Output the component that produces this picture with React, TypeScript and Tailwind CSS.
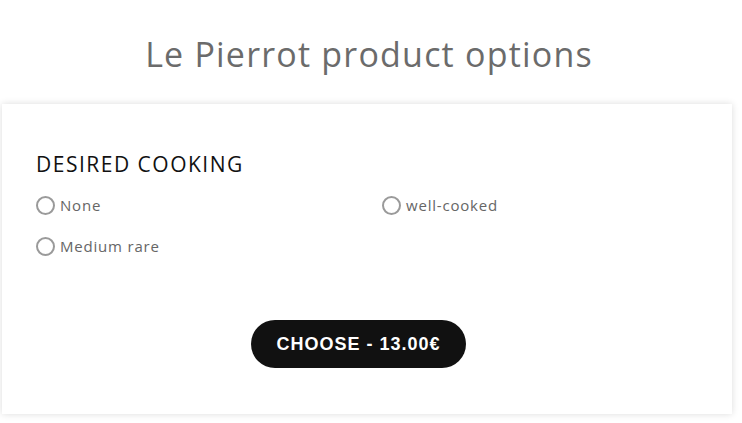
import React from "react";

function Radio({ label }: { label: string }) {
  return (
    <label className="flex items-center h-[20px]">
      <span className="w-[19px] h-[19px] rounded-full border-2 border-[#9a9a9a] bg-white shrink-0" />
      <span className="ml-[5px] text-[15px] text-[#666] tracking-[0.8px]" style={{ fontFamily: '"Open Sans", sans-serif' }}>
        {label}
      </span>
    </label>
  );
}

export default function App() {
  return (
    <div className="w-[742px] h-[423px] bg-white overflow-hidden">
      <h1
        className="text-center text-[34px] leading-[40px] text-[#6b6b6b] pt-[34px] h-[104px] tracking-[1.2px] pr-[4px]"
        style={{ fontFamily: '"Open Sans", sans-serif' }}
      >
        Le Pierrot product options
      </h1>
      <div className="ml-[2px] w-[730px] h-[310px] bg-white shadow-[0_0_7px_rgba(0,0,0,0.14)] pl-[34px] pt-[48px]">
        <h2
          className="text-[21px] leading-[24px] text-[#111] tracking-[1.5px]"
          style={{ fontFamily: '"Open Sans", sans-serif' }}
        >
          DESIRED COOKING
        </h2>
        <div className="grid grid-cols-[346px_1fr] gap-y-[21px] mt-[19px]">
          <Radio label="None" />
          <Radio label="well-cooked" />
          <Radio label="Medium rare" />
        </div>
        <div className="flex mt-[64px]">
          <button
            className="h-[48px] w-[215px] ml-[215px] rounded-full bg-[#111] text-white text-[18px] font-bold tracking-[1px]"
            style={{ fontFamily: '"Liberation Sans", Arial, sans-serif' }}
          >
            CHOOSE - 13.00€
          </button>
        </div>
      </div>
    </div>
  );
}
